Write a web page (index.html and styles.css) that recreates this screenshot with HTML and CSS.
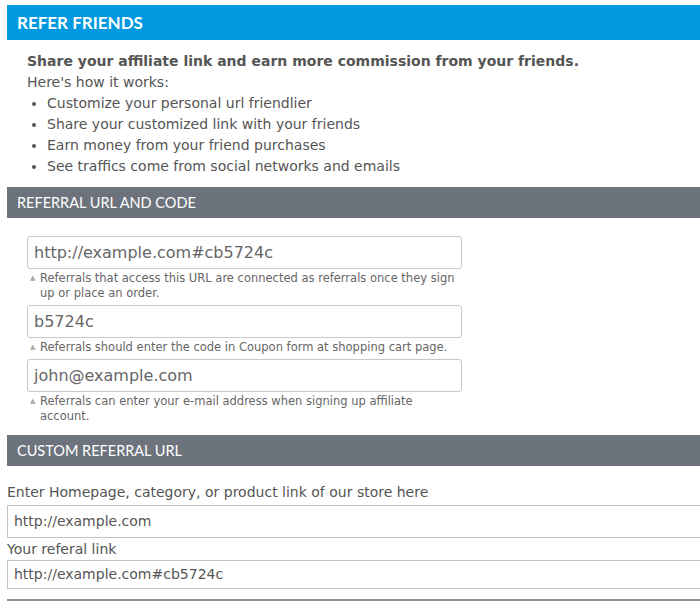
FILE: index.html
```html
<!DOCTYPE html>
<html>
<head>
<meta charset="utf-8">
<link rel="stylesheet" href="styles.css">
</head>
<body>
<div class="page">
  <h2 class="bar bar-blue">REFER FRIENDS</h2>
  <div class="intro">
    <p class="lead">Share your affiliate link and earn more commission from your friends.</p>
    <p>Here's how it works:</p>
    <ul class="steps">
      <li>Customize your personal url friendlier</li>
      <li>Share your customized link with your friends</li>
      <li>Earn money from your friend purchases</li>
      <li>See traffics come from social networks and emails</li>
    </ul>
  </div>
  <h3 class="bar bar-gray">REFERRAL URL AND CODE</h3>
  <div class="codes">
    <div class="field">http://example.com#cb5724c</div>
    <p class="help">Referrals that access this URL are connected as referrals once they sign up or place an order.</p>
    <div class="field">b5724c</div>
    <p class="help">Referrals should enter the code in Coupon form at shopping cart page.</p>
    <div class="field">john@example.com</div>
    <p class="help">Referrals can enter your e-mail address when signing up affiliate account.</p>
  </div>
  <h3 class="bar bar-gray">CUSTOM REFERRAL URL</h3>
  <div class="custom">
    <label class="label first">Enter Homepage, category, or product link of our store here</label>
    <div class="wide-field">http://example.com</div>
    <label class="label">Your referal link</label>
    <div class="wide-field short">http://example.com#cb5724c</div>
  </div>
</div>
</body>
</html>
```
FILE: styles.css
```css
html, body {
  margin: 0;
  padding: 0;
  background: #fff;
  overflow: hidden;
}
body {
  font-family: "DejaVu Sans", Verdana, sans-serif;
  color: #555;
  font-size: 14px;
}
.page {
  width: 740px;
  padding: 5px 0 0 7px;
}
.bar {
  margin: 0;
  color: #fff;
  font-family: Lato, "Open Sans", sans-serif;
  padding-left: 10px;
  display: flex;
  align-items: center;
}
.bar-blue {
  background: #0099e0;
  height: 35px;
  font-size: 17px;
  font-weight: 700;
}
.bar-gray {
  background: #6c737c;
  height: 31px;
  font-size: 14.5px;
  font-weight: 400;
}
.intro {
  padding: 11px 0 10px 20px;
  line-height: 21px;
}
.intro p {
  margin: 0;
}
.lead {
  font-weight: 700;
}
.steps {
  margin: 0;
  padding-left: 20px;
}
.codes {
  padding: 18px 0 7px 20px;
  width: 435px;
}
.field {
  box-sizing: border-box;
  height: 33px;
  border: 1px solid #c8c8c8;
  border-radius: 3px;
  padding: 0 6px;
  font-size: 16px;
  line-height: 31px;
  color: #666;
}
.help {
  position: relative;
  margin: 2px 0 4px;
  padding-left: 13px;
  font-size: 11.5px;
  line-height: 15px;
  color: #666;
}
.help::before {
  content: "\25B2";
  position: absolute;
  left: 3px;
  top: 0;
  font-size: 7px;
  color: #aaa;
}
.custom {
  padding-top: 15px;
  border-bottom: 2px solid #8a8f94;
  padding-bottom: 10px;
}
.label {
  display: block;
  font-size: 14px;
  line-height: 22px;
}
.label.first {
  margin-bottom: 2px;
}
.wide-field {
  box-sizing: border-box;
  height: 33px;
  border: 1px solid #c4c4c4;
  border-right: 0;
  padding: 0 6px;
  font-size: 14px;
  line-height: 31px;
  color: #555;
}
.wide-field.short {
  height: 29px;
  line-height: 27px;
}
```
